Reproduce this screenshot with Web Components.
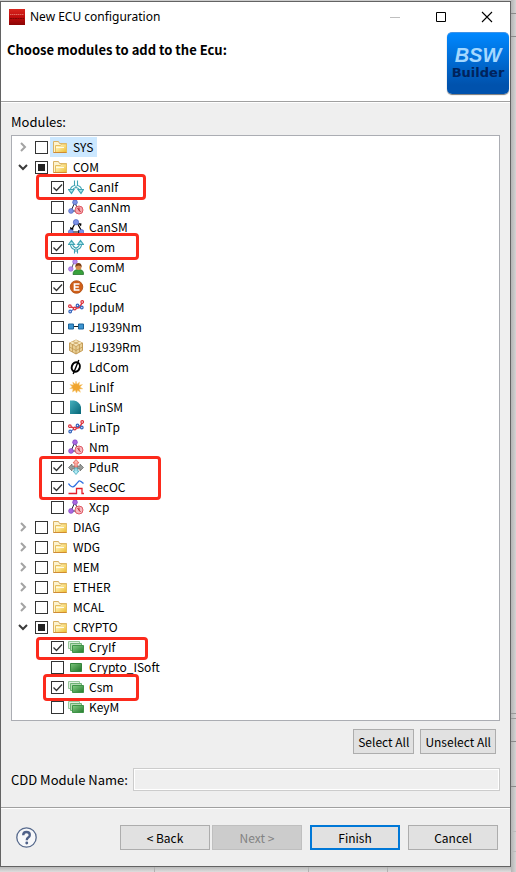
<!DOCTYPE html>
<html lang="en">
<head>
<meta charset="utf-8">
<title>New ECU configuration</title>
<style>
  html, body { margin: 0; min-height: 100%; }
  body {
    min-height: 100vh;
    display: flex;
    font: 12px/20px "Noto Sans CJK SC", "Noto Sans", sans-serif;
    color: #000;
    --face: #efefef;
    --line: #a0a0a0;
  }
</style>
</head>
<body>
<ecu-desktop>
  <ecu-dialog caption="New ECU configuration" heading="Choose modules to add to the Ecu:">
    <module-tree label="Modules:">
      <tree-item name="SYS" icon="folder" branch selected></tree-item>
      <tree-item name="COM" icon="folder" branch open state="mixed">
        <tree-item name="CanIf" icon="split" state="on"></tree-item>
        <tree-item name="CanNm" icon="nodesblue"></tree-item>
        <tree-item name="CanSM" icon="machine"></tree-item>
        <tree-item name="Com" icon="merge" state="on"></tree-item>
        <tree-item name="ComM" icon="person"></tree-item>
        <tree-item name="EcuC" icon="ecu" state="on"></tree-item>
        <tree-item name="IpduM" icon="plot"></tree-item>
        <tree-item name="J1939Nm" icon="link"></tree-item>
        <tree-item name="J1939Rm" icon="box"></tree-item>
        <tree-item name="LdCom" icon="phi"></tree-item>
        <tree-item name="LinIf" icon="spark"></tree-item>
        <tree-item name="LinSM" icon="quarter"></tree-item>
        <tree-item name="LinTp" icon="plot"></tree-item>
        <tree-item name="Nm" icon="nodes"></tree-item>
        <tree-item name="PduR" icon="router" state="on"></tree-item>
        <tree-item name="SecOC" icon="signal" state="on"></tree-item>
        <tree-item name="Xcp" icon="nodes"></tree-item>
      </tree-item>
      <tree-item name="DIAG" icon="folder" branch></tree-item>
      <tree-item name="WDG" icon="folder" branch></tree-item>
      <tree-item name="MEM" icon="folder" branch></tree-item>
      <tree-item name="ETHER" icon="folder" branch></tree-item>
      <tree-item name="MCAL" icon="folder" branch></tree-item>
      <tree-item name="CRYPTO" icon="folder" branch open state="mixed">
        <tree-item name="CryIf" icon="stack" state="on"></tree-item>
        <tree-item name="Crypto_ISoft" icon="chip"></tree-item>
        <tree-item name="Csm" icon="stack" state="on"></tree-item>
        <tree-item name="KeyM" icon="stack"></tree-item>
      </tree-item>
      <mark-box slot="marks" style="--x:24px;--y:38px;--w:110px;--h:26px"></mark-box>
      <mark-box slot="marks" style="--x:33px;--y:97px;--w:94px;--h:27px"></mark-box>
      <mark-box slot="marks" style="--x:27px;--y:320px;--w:122px;--h:44px"></mark-box>
      <mark-box slot="marks" style="--x:24px;--y:501px;--w:112px;--h:23px"></mark-box>
      <mark-box slot="marks" style="--x:31px;--y:538px;--w:96px;--h:27px"></mark-box>
    </module-tree>
    <button-row>
      <push-button class="tight">Select All</push-button>
      <push-button class="tight">Unselect All</push-button>
    </button-row>
    <name-field label="CDD Module Name:"></name-field>
    <wizard-bar slot="footer"></wizard-bar>
  </ecu-dialog>
</ecu-desktop>

<script>
const ICONS = {
  folder: `<defs><linearGradient id="f" x2="1" y2="1"><stop offset=".2" stop-color="#fff3b8"/><stop offset="1" stop-color="#ecbb2c"/></linearGradient></defs>
    <path d="M1.5 13.5v-11h5l1 2h7v9z" fill="#fdf3cf" stroke="#d9b264"/>
    <path d="M3.5 6.500h5l1-1.500h5v8.500h-11z" fill="url(#f)" stroke="#e6bf62"/><path d="M4 8.500h8" stroke="#fffbe8"/><path d="M1.500 13.500h13" stroke="#d08b32"/>`,
  split: `<g fill="none" stroke="#3fa3b3" stroke-width="1.100"><path d="M6.500 1.500v5q-4 1-4 4.500m7-9.500v5q4 1 4 4.500" /><path d="M8 6.500v2q-3 .5-3.500 3m3.500-3q3 .5 3.500 3"/><path d="M.5 10.500h5.500l-2.500 4zM10 10.500h5.500l-2.500 4z" fill="#a4e2ea"/></g>`,
  merge: `<g fill="none" stroke="#3fa3b3" stroke-width="1.100"><path d="M6.500 14.500v-4q-4-1-4-5.500m7 9.500v-4q4-1 4-5.500"/><path d="M8 13v-4q-3-.5-3.500-4m3.500 4q3-.5 3.500-4"/><path d="M.5 5.500l3-4 3 4zM9.500 5.500l3-4 3 4z" fill="#a4e2ea"/></g>`,
  nodesblue: `<path d="M7 3l-4 9h7z" fill="none" stroke="#223"/><g fill="#7c92e6" stroke="#4359b8" stroke-width=".6"><circle cx="7" cy="3.200" r="2.400"/><circle cx="3" cy="12" r="2.400"/></g><circle cx="11" cy="11" r="4" fill="#f5a5ab" stroke="#df5b66"/><path d="M9.500 9l3 4m-1.500-4.500v3" stroke="#b92936" fill="none"/>`,
  nodes: `<path d="M7 3l-4 9h7z" fill="none" stroke="#223"/><g fill="#a967e2" stroke="#7a3cb8" stroke-width=".6"><circle cx="7" cy="3.200" r="2.400"/><circle cx="3" cy="12" r="2.400"/></g><circle cx="11" cy="11" r="4" fill="#f7bac0" stroke="#df5b66"/><path d="M9.500 9l3 4m-1.500-4.500v3" stroke="#c5323f" fill="none"/>`,
  machine: `<path d="M7 4.500L3.500 11m6-6.500L13 11M5 13h6" fill="none" stroke="#000" stroke-width="1.200"/><path d="M2 8l.5 4 3.500-2zM10 11v4l3-2zM10 4l3 3.500.5-3z" fill="#000"/><g fill="#7c92e6" stroke="#4359b8" stroke-width=".6"><circle cx="8" cy="3.200" r="2.700"/><circle cx="2.900" cy="13" r="2.500"/><circle cx="13.400" cy="13" r="2.500"/></g>`,
  person: `<path d="M6 3l-3 8" stroke="#555"/><g fill="#b98af0" stroke="#8d55cf" stroke-width=".6"><circle cx="7" cy="2.800" r="2.300"/><circle cx="2.800" cy="10" r="2.300"/></g><path d="M5 15.500q0-5 5.500-5t5 5z" fill="#38a13c" stroke="#17691f" stroke-width=".7"/><circle cx="10.500" cy="8" r="3" fill="#d48a4e"/><path d="M7.300 8q0-4 3.200-4t3.200 4q-1-1.500-3-1.500t-3.400 1.500z" fill="#7a3d17"/>`,
  ecu: `<circle cx="8.500" cy="8" r="6.300" fill="#cf5f18" stroke="#b04d10" stroke-width=".8"/><path d="M11.500 5h-5v6h5m-5-3h4.300" fill="none" stroke="#fff" stroke-width="1.700"/>`,
  plot: `<g fill="none"><path d="M2 12.500l5-3 3-3.500 4 2.500" stroke="#4474c8" stroke-width="1.200"/><path d="M2 7.500l5 2 4.500-1 3-5.500" stroke="#dd323d" stroke-width="1.500"/></g><g fill="#fff" stroke="#dd323d" stroke-width="1.200"><circle cx="1.900" cy="7.200" r="1.300"/><circle cx="6.800" cy="9.500" r="1.300"/><circle cx="14.200" cy="3" r="1.300"/></g><g fill="#dfe9ff" stroke="#3566bd" stroke-width="1.200"><circle cx="2.200" cy="12.500" r="1.300"/><circle cx="9.500" cy="6.500" r="1.300"/><circle cx="13.800" cy="8.500" r="1.300"/></g>`,
  link: `<path d="M5 7.500h6" stroke="#222"/><path d="M.5 5h5v5h-5zM10.500 5h5v5h-5z" fill="#3c94d0" stroke="#1c659b"/>`,
  box: `<path d="M8 1l6.500 3v7.500L8 15l-6.500-3.500V4z" fill="#e9cf96" stroke="#b98a3b" stroke-width=".8"/><path d="M8 1l6.500 3L8 7.500 1.500 4z" fill="#f6e6bd"/><path d="M1.500 4L8 7.500 14.500 4M8 7.500V15M5 2.500l6.500 3.300V13M11 2.500L4.500 5.800V13M1.500 8L8 11.500 14.500 8" fill="none" stroke="#bd9147" stroke-width=".7"/>`,
  phi: `<ellipse cx="7.800" cy="8" rx="4" ry="4.800" transform="rotate(18 8 8)" fill="none" stroke="#000" stroke-width="2"/><path d="M10.800 1L5.200 15" stroke="#000" stroke-width="1.400"/>`,
  spark: `<path d="M8 2l1 3.200L11.500 3l-.5 3.200 3.500-.7-2.500 2.500 2.800 1.800-3.400.3 1 3.200-2.700-1.800L8.500 14l-1.300-2.700L4.500 13l.5-3.200-3.300-.2L4.300 8 2 5.500l3.300.6L4.800 3l2.400 2.100z" fill="#f0a52e" stroke="#f6cb7c" stroke-width=".5"/>`,
  quarter: `<defs><linearGradient id="q" x2="1" y2="1"><stop stop-color="#45b0bd"/><stop offset="1" stop-color="#056577"/></linearGradient></defs><path d="M2 1.500h4Q11.500 2.500 13 8v7H2z" fill="url(#q)"/>`,
  router: `<path d="M.5 8.500L4 5v2h3v3H4v2zM15.500 8.500L12 5v2H9v3h3v2z" fill="#999b99" stroke="#666866" stroke-width=".7"/><path d="M8 .5l3 3.500H9.200v4H6.800V4H5z" fill="#ffb7ad" stroke="#df5f55" stroke-width=".8"/><path d="M8 15.500l3-3.500H9.200V9H6.800v3H5z" fill="#b4eaf3" stroke="#43a8ba" stroke-width=".8"/>`,
  signal: `<path d="M.5 4.500Q4 10 7 6.500T11 2t4.500 2.500" fill="none" stroke="#2f70e0" stroke-width="1.300"/><path d="M.5 14.500h8v-5h5.500v5h2" fill="none" stroke="#e3202a" stroke-width="1.300"/>`,
  stack: `<defs><linearGradient id="g" x2="1" y2="1"><stop stop-color="#86cf86"/><stop offset="1" stop-color="#237a2c"/></linearGradient></defs><path d="M.5 2.500h11v7H.5z" fill="#dff0df" stroke="#97c79a"/><path d="M2.500 4.500h11v7h-11z" fill="#b5dcb5" stroke="#6fb274"/><path d="M4.500 6.500h11v7h-11z" fill="url(#g)" stroke="#3f9347"/>`,
  chip: `<defs><linearGradient id="g" x2="1" y2="1"><stop stop-color="#7cc67c"/><stop offset="1" stop-color="#1e7227"/></linearGradient></defs><path d="M2.500 4.500h11v8h-11z" fill="url(#g)" stroke="#35853d"/>`,
  app: `<defs><linearGradient id="r" x2="0" y2="1"><stop stop-color="#d8271f"/><stop offset=".5" stop-color="#c00d0d"/><stop offset="1" stop-color="#8b0505"/></linearGradient></defs><path d="M0 0h16v16H0z" fill="url(#r)"/><path d="M1 5.500h14" stroke="#e06a60" stroke-dasharray="1.500 .5"/><path d="M1 9.500h14" stroke="#7c0505" stroke-dasharray="2 .5"/>`,
  min: `<path d="M3 8.500h10" stroke="#bfbfbf"/>`,
  max: `<path d="M3.500 3.500h9v9h-9z" fill="none" stroke="#000"/>`,
  close: `<path d="M3 3l10 10M13 3L3 13" stroke="#000" stroke-width="1.100"/>`,
  closed: `<path d="M6 4l4 4-4 4" fill="none" stroke="#a3a3a3" stroke-width="2"/>`,
  opened: `<path d="M4 6l4 4 4-4" fill="none" stroke="#3c3c3c" stroke-width="2"/>`,
  help: `<circle cx="8" cy="8" r="7.400" fill="#f7f8fa" stroke="#576a8d" stroke-width="1"/><path d="M5.500 6.200Q5.500 3.800 8 3.800t2.500 2.200Q10.500 7.200 9.300 8 8.200 8.700 8.200 10" fill="none" stroke="#4f6188" stroke-width="1.800"/><circle cx="8.200" cy="12.200" r="1.100" fill="#4f6188"/>`
};

function define(tag, render) {
  customElements.define(tag, class extends HTMLElement {
    connectedCallback() {
      if (this.shadowRoot) return;
      this.attachShadow({ mode: 'open' }).innerHTML = render(this);
    }
  });
}

define('ui-icon', el => `
  <style>:host{display:block;flex:none;width:var(--size,16px);height:var(--size,16px)} svg{display:block;width:100%;height:100%}</style>
  <svg viewBox="0 0 16 16" aria-hidden="true">${ICONS[el.getAttribute('name')]}</svg>`);

define('ecu-desktop', () => `
  <style>
    :host{display:flex;flex:1;min-width:0;box-sizing:border-box;padding:1px 5px 5px 0;
      background:
        linear-gradient(#8a8a8a,#8a8a8a) right 13px/5px 1px,
        linear-gradient(#8a8a8a,#8a8a8a) right 36px/5px 1px,
        linear-gradient(#999,#999) right 713px/5px 1px,
        linear-gradient(#999,#999) right 718px/5px 1px,
        linear-gradient(#8a8a8a,#8a8a8a) right 741px/5px 1px,
        linear-gradient(#8a8a8a,#8a8a8a) right 786px/5px 1px,
        linear-gradient(#bbb,#bbb) right 831px/5px 1px,
        linear-gradient(#bbb,#bbb) right 851px/5px 1px,
        linear-gradient(#b0b0b0,#b0b0b0) 154px bottom/1px 5px,
        linear-gradient(#b0b0b0,#b0b0b0) 308px bottom/1px 5px,
        linear-gradient(#b0b0b0,#b0b0b0) 387px bottom/1px 5px,
        linear-gradient(90deg,#b4b4b4,#d4d4d4) right top/5px 100%,
        linear-gradient(#b8b8b8,#dedede) left bottom/100% 5px, #cdcdcd;
      background-repeat:no-repeat}
  </style><slot></slot>`);

define('ecu-dialog', el => `
  <style>
    :host{display:flex;flex-direction:column;flex:1;min-width:0;box-sizing:border-box;border:1px solid #636363;background:var(--face)}
    .bar{display:flex;align-items:center;height:29px;background:#fff;padding-left:8px}
    .bar span{flex:1;margin-left:5px;font:12px/20px "Noto Sans",sans-serif}
    .bar button{border:0;background:none;width:46px;height:28px;padding:0;display:grid;place-items:center}
    header{display:flex;justify-content:space-between;background:#fff;height:70px;border-bottom:1px solid var(--line);box-shadow:0 1px #fff}
    h1{margin:9px 0 0 6px;font-size:13px;line-height:20px;font-weight:700}
    main{display:flex;flex-direction:column;flex:1;padding:10px 10px 16px;}
    footer{border-top:1px solid var(--line);box-shadow:inset 0 1px #fff}
  </style>
  <div class="bar"><ui-icon name="app"></ui-icon><span>${el.getAttribute('caption')}</span>
    <button aria-label="Minimize"><ui-icon name="min"></ui-icon></button>
    <button aria-label="Maximize"><ui-icon name="max"></ui-icon></button>
    <button aria-label="Close"><ui-icon name="close"></ui-icon></button></div>
  <header><h1>${el.getAttribute('heading')}</h1><builder-logo></builder-logo></header>
  <main><slot></slot></main>
  <footer><slot name="footer"></slot></footer>`);

define('builder-logo', () => `
  <style>
    :host{display:flex;flex-direction:column;align-items:center;box-sizing:border-box;width:62px;height:62px;margin:1px 1px 0 0;padding-top:13px;
      border-radius:5px;border-top:1px solid #3e93e8;background:linear-gradient(#0088ff,#0052ad 85%);box-shadow:0 1px 1px #777;white-space:nowrap}
    b{font:italic bold 20px/18px "Liberation Sans",sans-serif;color:#a4d8ff}
    strong{font:bold 13px/18px "DejaVu Sans",sans-serif;color:#00235c}
  </style><b>BSW</b><strong>Builder</strong>`);

define('module-tree', el => `
  <style>
    :host{display:block}
    h2{margin:0 0 3px;font-size:13px;line-height:20px;font-weight:400}
    .box{position:relative;border:1px solid #abadb3;background:#fff;padding:1px 3px 3px}
  </style>
  <h2 id="t">${el.getAttribute('label')}</h2>
  <div class="box" role="tree" aria-labelledby="t"><slot></slot><slot name="marks"></slot></div>`);

define('mark-box', () => `
  <style>:host{position:absolute;left:var(--x);top:var(--y);width:var(--w);height:var(--h);box-sizing:border-box;border:3px solid #fc2a1c;border-radius:4px;pointer-events:none}</style>`);

define('tree-item', el => {
  const has = n => el.hasAttribute(n), open = has('open'), state = el.getAttribute('state');
  return `
  <style>
    :host{display:block}
    .row{display:flex;align-items:center;height:20px}
    .twist{width:16px;height:16px;margin-right:4px;padding:0;border:0;background:none}
    .leaf{width:20px}
    .check{display:grid;flex:none;width:13px;height:13px;margin-right:2px}
    .check>*{grid-area:1/1}
    input{appearance:none;box-sizing:border-box;width:13px;height:13px;margin:0;border:1px solid #333;background:#fff}
    svg{width:13px;height:13px;pointer-events:none}
    label{display:flex;align-items:center;gap:5px;height:20px;padding:0 4px 0 2px;white-space:nowrap}
    label.sel{background:#cce8ff}
    .kids{padding-left:16px}
  </style>
  <div class="row" role="treeitem">
    ${has('branch') ? `<button class="twist" aria-expanded="${open}" aria-label="Toggle ${el.getAttribute('name')}"><ui-icon name="${open ? 'opened' : 'closed'}"></ui-icon></button>` : '<span class="leaf"></span>'}
    <span class="check"><input type="checkbox" id="c" ${state === 'on' ? 'checked' : ''}>
      <svg viewBox="0 0 13 13" aria-hidden="true">${state === 'on' ? '<path d="M2.500 6.500l3 3 5.500-6" fill="none" stroke="#333" stroke-width="1.300"/>' : state === 'mixed' ? '<path d="M3 3h7v7H3z" fill="#222"/>' : ''}</svg></span>
    <label for="c" class="${has('selected') ? 'sel' : ''}"><ui-icon name="${el.getAttribute('icon')}"></ui-icon>${el.getAttribute('name')}</label>
  </div>
  ${open ? '<div class="kids" role="group"><slot></slot></div>' : ''}`;
});

define('push-button', el => `
  <style>
    :host{display:block;width:90px}
    :host(.tight){width:auto}
    button{box-sizing:border-box;width:100%;height:25px;padding:0 4px;border:1px solid #adadad;background:#e1e1e1;color:#000;font:inherit;line-height:20px;white-space:nowrap}
    :host(.primary) button{border:2px solid #0078d7}
    button:disabled{background:#ccc;border-color:#bfbfbf;color:#838383}
  </style><button type="button" ${el.hasAttribute('disabled') ? 'disabled' : ''}><slot></slot></button>`);

define('button-row', () => `
  <style>:host{display:flex;justify-content:flex-end;gap:6px;padding:8px 4px 14px 0}</style><slot></slot>`);

define('name-field', el => `
  <style>
    :host{display:flex;align-items:center;gap:5px;font-size:13px}
    label{white-space:nowrap}
    input{flex:1;min-width:0;box-sizing:border-box;height:23px;border:1px solid #ccc;background:var(--face);box-shadow:inset 0 0 0 1px #fff;font:inherit}
  </style><label for="n">${el.getAttribute('label')}</label><input id="n" type="text" disabled>`);

define('wizard-bar', () => `
  <style>
    :host{display:flex;align-items:center;padding:17px 12px 16px 15px}
    .help{border:0;background:none;padding:0;margin-right:auto;--size:21px}
    .group{display:flex;gap:2px;margin-right:8px}
    .end{display:flex;gap:8px}
  </style>
  <button class="help" aria-label="Help"><ui-icon name="help"></ui-icon></button>
  <div class="group"><push-button>&lt; Back</push-button><push-button disabled>Next &gt;</push-button></div>
  <div class="end"><push-button class="primary">Finish</push-button><push-button>Cancel</push-button></div>`);
</script>
</body>
</html>
